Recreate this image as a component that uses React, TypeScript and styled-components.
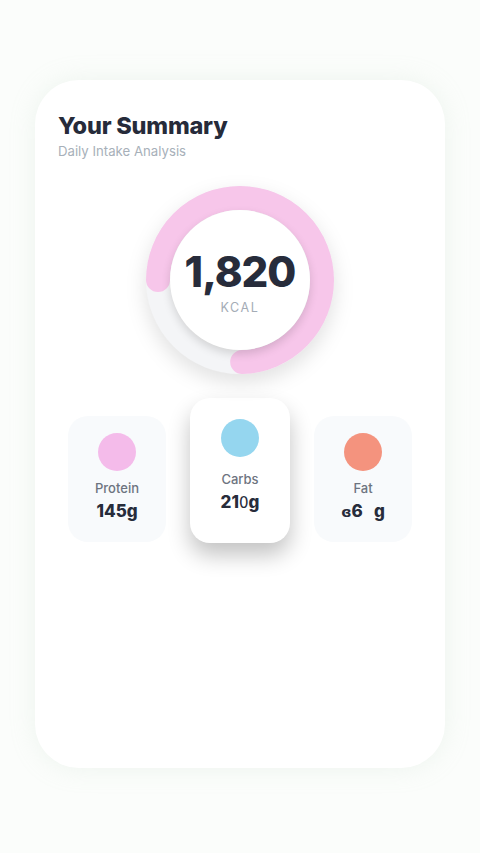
import React from "react";
import styled, { createGlobalStyle } from "styled-components";

const Global = createGlobalStyle`
  html, body { margin: 0; padding: 0; background: #fbfdfb; }
  body { font-family: "Inter", "Noto Sans", sans-serif; }
  * { box-sizing: border-box; }
`;

const Page = styled.div`
  width: 480px;
  height: 853px;
  padding: 80px 35px 0 35px;
  background: #fbfdfb;
`;

const Card = styled.div`
  width: 410px;
  height: 688px;
  background: #ffffff;
  border-radius: 44px;
  box-shadow: 0 0 24px rgba(200, 220, 205, 0.25);
  padding: 31px 23px 0 23px;
  display: flex;
  flex-direction: column;
`;

const Title = styled.h1`
  margin: 0;
  font-family: "Inter", sans-serif;
  font-weight: 800;
  font-size: 23.5px;
  letter-spacing: -0.2px;
  line-height: 30px;
  color: #262b3a;
`;

const Subtitle = styled.p`
  margin: 1px 0 0 0;
  font-family: "Inter", sans-serif;
  font-size: 13.2px;
  font-weight: 400;
  color: #a7b0b9;
  line-height: 18px;
`;

const RingWrap = styled.div`
  position: relative;
  align-self: center;
  width: 200px;
  height: 200px;
  margin-top: 20px;
`;

const RingSvg = styled.svg`
  display: block;
  filter: drop-shadow(0 8px 10px rgba(0, 0, 0, 0.12));
`;

const Center = styled.div`
  position: absolute;
  left: 30px;
  top: 30px;
  width: 140px;
  height: 140px;
  border-radius: 50%;
  background: #ffffff;
  box-shadow: 0 4px 10px rgba(0, 0, 0, 0.14);
  display: flex;
  flex-direction: column;
  align-items: center;
  justify-content: center;
`;

const Kcal = styled.div`
  font-family: "Inter", sans-serif;
  font-weight: 800;
  font-size: 42px;
  letter-spacing: -1px;
  line-height: 46px;
  color: #272c3b;
  margin-top: 4px;
`;

const Unit = styled.div`
  font-family: "Inter", sans-serif;
  font-size: 12.5px;
  letter-spacing: 1.6px;
  color: #a4acb6;
  margin-top: 5px;
`;

const Macros = styled.div`
  display: flex;
  justify-content: center;
  align-items: flex-start;
  gap: 24px;
  margin-top: 18px;
`;

const MacroCard = styled.div<{ $active?: boolean }>`
  width: ${(p) => (p.$active ? 100 : 98)}px;
  height: ${(p) => (p.$active ? 145 : 126)}px;
  margin-top: ${(p) => (p.$active ? 0 : 18)}px;
  border-radius: 20px;
  background: ${(p) => (p.$active ? "#ffffff" : "#f8fafc")};
  box-shadow: ${(p) =>
    p.$active ? "0 12px 22px rgba(0, 0, 0, 0.24)" : "none"};
  display: flex;
  flex-direction: column;
  align-items: center;
  padding-top: ${(p) => (p.$active ? 21 : 17)}px;
`;

const Dot = styled.div<{ $color: string }>`
  width: 38px;
  height: 38px;
  border-radius: 50%;
  background: ${(p) => p.$color};
`;

const Label = styled.div<{ $active?: boolean }>`
  margin-top: ${(p) => (p.$active ? 13 : 8)}px;
  font-family: "Inter", sans-serif;
  font-weight: 500;
  font-size: 13px;
  line-height: 18px;
  color: #6d7480;
`;

const Value = styled.div`
  margin-top: 3px;
  font-family: "Inter", sans-serif;
  font-weight: 800;
  font-size: 17px;
  line-height: 22px;
  color: #272c3b;
  white-space: pre;
`;

const Thin = styled.span`
  font-weight: 400;
  font-family: "DejaVu Sans", sans-serif;
  font-size: 15px;
`;

const Glitch = styled.span`
  font-size: 14px;
  font-weight: 700;
  font-family: "DejaVu Sans", sans-serif;
`;

const R = 82;
const C = 2 * Math.PI * R;
const startDeg = 180;
const sweepDeg = 268;

export default function App() {
  const arcLen = (sweepDeg / 360) * C;
  return (
    <>
      <Global />
      <Page>
        <Card>
          <Title>Your Summary</Title>
          <Subtitle>Daily Intake Analysis</Subtitle>
          <RingWrap>
            <RingSvg width="200" height="200" viewBox="0 0 200 200">
              <circle cx="100" cy="100" r={R} fill="none" stroke="#f4f5f7" strokeWidth="24" />
              <circle
                cx="100"
                cy="100"
                r={R}
                fill="none"
                stroke="#f7c6ea"
                strokeWidth="24"
                strokeLinecap="round"
                strokeDasharray={`${arcLen} ${C}`}
                transform={`rotate(${startDeg} 100 100)`}
              />
            </RingSvg>
            <Center>
              <Kcal>1,820</Kcal>
              <Unit>KCAL</Unit>
            </Center>
          </RingWrap>
          <Macros>
            <MacroCard>
              <Dot $color="#f4bbea" />
              <Label>Protein</Label>
              <Value>145g</Value>
            </MacroCard>
            <MacroCard $active>
              <Dot $color="#95d6ef" />
              <Label $active>Carbs</Label>
              <Value>
                21<Thin>0</Thin>g
              </Value>
            </MacroCard>
            <MacroCard>
              <Dot $color="#f4937e" />
              <Label>Fat</Label>
              <Value>
                <Glitch>ɞ</Glitch>6{"   "}g
              </Value>
            </MacroCard>
          </Macros>
        </Card>
      </Page>
    </>
  );
}
